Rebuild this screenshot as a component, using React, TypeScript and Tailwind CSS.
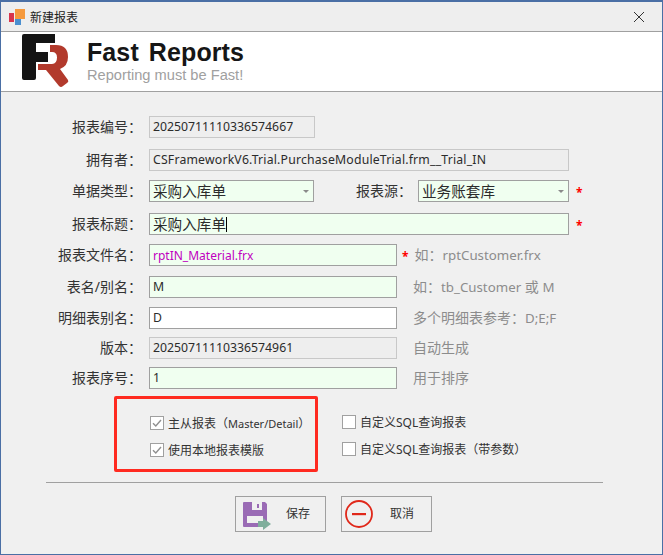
const latin = "font-['Noto_Sans','Noto_Sans_CJK_SC',sans-serif]";

function Label({ text }: { text: string }) {
  return <div className="mr-[7px] w-[98px] shrink-0 whitespace-nowrap text-right text-[14px] leading-[22px] text-[#333]">{text}</div>;
}

function Field({
  value,
  w,
  kind = "edit",
  caret,
  combo,
  textClass = "text-[12.25px] text-[#2b2b2b]",
}: {
  value: string;
  w: string;
  kind?: "edit" | "readonly" | "white";
  caret?: boolean;
  combo?: boolean;
  textClass?: string;
}) {
  const tone =
    kind === "readonly"
      ? "bg-[#eeeeee] border-[#c8c8c8]"
      : kind === "white"
        ? "bg-white border-[#a0a0a0]"
        : "bg-[#f0fff0] border-[#a0a0a0]";
  return (
    <div className={"flex h-[22px] shrink-0 items-center border pl-[3px] pr-[4px] " + w + " " + tone}>
      <span className={"whitespace-pre leading-[20px] " + textClass}>{value}</span>
      {caret && <span className="h-[15px] w-px bg-black" />}
      {combo && <span className="ml-auto mt-px h-0 w-0 border-x-[3px] border-t-[3px] border-x-transparent border-t-[#8a8a8a]" />}
    </div>
  );
}

const bigText = "text-[14.6px] text-[#2b2b2b]";

function Star({ className }: { className: string }) {
  return <div className={"flex h-[22px] items-center pt-[4px] text-[12px] font-bold leading-none text-[#ff0000] " + className}>*</div>;
}

function Hint({ children, className = "" }: { children: React.ReactNode; className?: string }) {
  return <div className={"whitespace-nowrap text-[14px] leading-[22px] text-[#8c8c8c] " + className}>{children}</div>;
}

function Check({ children, checked }: { children: React.ReactNode; checked?: boolean }) {
  return (
    <div className="flex h-[14px] items-center gap-[4px] whitespace-nowrap text-[12px] leading-[14px] text-[#333]">
      <span className="flex h-[14px] w-[14px] shrink-0 items-center justify-center border border-[#a0a0a0] bg-white">
        {checked && (
          <svg width="10" height="10" viewBox="0 0 10 10" fill="none">
            <path d="M1 5.2 L3.8 8 L9 2" stroke="#8f8f8f" strokeWidth="1.4" />
          </svg>
        )}
      </span>
      <span className="mt-[2px]">{children}</span>
    </div>
  );
}

function Logo() {
  return (
    <svg width="47" height="54" viewBox="0 0 47 54" className="shrink-0">
      <path d="M28 11 H34 Q46 11 46 23 Q46 32 38 35 L46 46 Q47 48 45 49 L41 52 Q39 54 37 52 L24 36 H16 V30 H30 Q35 30 35 23.5 Q35 18 30 18 H28 Z" fill="#b23a2c" />
      <path d="M2 0 H33 V9 H14 V18 H26 V28 H14 V44 Q14 46 12 46 H2 Q0 46 0 44 V2 Q0 0 2 0 Z" fill="#141414" />
    </svg>
  );
}

function SaveIcon() {
  return (
    <svg width="28" height="28" viewBox="0 0 28 28" className="mt-[3px] shrink-0">
      <path fillRule="evenodd" d="M1 0 H22 L24 2 V24 Q24 25 23 25 H1 Q0 25 0 24 V1 Q0 0 1 0 Z M9 0 V8 H19 V0 Z M4 14 V21 H20 V14 Z" fill="#9a6bb5" />
      <rect x="14" y="2" width="2" height="4" fill="#9a6bb5" />
      <path d="M15 19 H20 V16 L28 22 L20 28 V25 H15 Z" fill="#7fae9c" />
    </svg>
  );
}

function CancelIcon() {
  return (
    <svg width="28" height="28" viewBox="0 0 28 28" className="shrink-0">
      <circle cx="14" cy="14" r="13" fill="none" stroke="#e0281a" strokeWidth="1.8" />
      <rect x="7" y="13" width="14" height="2.2" fill="#e0281a" />
    </svg>
  );
}

function Btn({ label, icon, className }: { label: string; icon: React.ReactNode; className: string }) {
  return (
    <div className={"flex h-[36px] w-[91px] items-center border border-[#a0a0a0] text-[12px] text-[#333] " + className}>
      {icon}
      <span>{label}</span>
    </div>
  );
}

export default function App() {
  return (
    <div className={"flex h-[555px] w-[663px] flex-col overflow-hidden border border-t-[2px] border-[#4a6fa5] bg-[#f0f0f0] " + latin}>
      <div className="flex h-[29px] shrink-0 items-center bg-[#eeeeee] pl-[8px] pr-[17px]">
        <svg width="16" height="16" viewBox="0 0 16 16" className="shrink-0">
          <rect x="0" y="4" width="5" height="9" fill="#d8344c" />
          <rect x="6" y="0" width="10" height="10" fill="#f59a3e" />
          <rect x="6" y="10" width="6" height="6" fill="#4a8fd0" />
        </svg>
        <span className="ml-[5px] mt-[2px] text-[12px] text-[#222]">新建报表</span>
        <svg width="12" height="12" viewBox="0 0 12 12" className="ml-auto">
          <path d="M1 1 L11 11 M11 1 L1 11" stroke="#333" strokeWidth="1" />
        </svg>
      </div>

      <div className="flex h-[61px] shrink-0 items-start border-y border-[#a0a0a0] bg-white pl-[21px] pt-[2px]">
        <Logo />
        <div className="ml-[18px] font-['Liberation_Sans',sans-serif]">
          <div className="mt-[4px] text-[25px] font-bold leading-[28px] tracking-[0.1px] text-[#161616] [word-spacing:3px]">Fast Reports</div>
          <div className="text-[14.65px] leading-[18px] text-[#a0a0a0]">Reporting must be Fast!</div>
        </div>
      </div>

      <div className="flex flex-col pl-[43px] pt-[24px]">
        <div className="flex items-center">
          <Label text="报表编号：" />
          <Field value="20250711110336574667" w="w-[166px]" kind="readonly" />
        </div>
        <div className="mt-[11px] flex items-center">
          <Label text="拥有者：" />
          <Field value="CSFrameworkV6.Trial.PurchaseModuleTrial.frm__Trial_IN" w="w-[420px]" kind="readonly" textClass="text-[12.25px] tracking-[0.19px] text-[#2b2b2b]" />
        </div>
        <div className="mt-[9px] flex items-center">
          <Label text="单据类型：" />
          <Field value="采购入库单" w="w-[165px]" combo textClass={bigText} />
          <span className="ml-[42px] w-[62px] shrink-0 whitespace-nowrap text-[14px] leading-[22px] text-[#333]">报表源：</span>
          <Field value="业务账套库" w="w-[151px]" combo textClass={bigText} />
          <Star className="ml-[7px]" />
        </div>
        <div className="mt-[11px] flex items-center">
          <Label text="报表标题：" />
          <Field value="采购入库单" w="w-[420px]" caret textClass={bigText} />
          <Star className="ml-[7px]" />
        </div>
        <div className="mt-[9px] flex items-center">
          <Label text="报表文件名：" />
          <Field value="rptIN_Material.frx" w="w-[248px]" textClass="mt-px text-[12px] text-[#c000c0]" />
          <Star className="ml-[5px] mr-[6px]" />
          <Hint>如：<span className="text-[13.3px]">rptCustomer.frx</span></Hint>
        </div>
        <div className="mt-[10px] flex items-center">
          <Label text="表名/别名：" />
          <Field value="M" w="w-[248px]" />
          <Hint className="ml-[16px]">如：<span className="text-[13.3px]">tb_Customer</span> 或 <span className="text-[13.3px]">M</span></Hint>
        </div>
        <div className="mt-[9px] flex items-center">
          <Label text="明细表别名：" />
          <Field value="D" w="w-[248px]" kind="white" />
          <Hint className="ml-[16px]">多个明细表参考：<span className="text-[13.3px]">D;E;F</span></Hint>
        </div>
        <div className="mt-[8px] flex items-center">
          <Label text="版本：" />
          <Field value="20250711110336574961" w="w-[248px]" kind="readonly" />
          <Hint className="ml-[16px]">自动生成</Hint>
        </div>
        <div className="mt-[8px] flex items-center">
          <Label text="报表序号：" />
          <Field value="1" w="w-[248px]" />
          <Hint className="ml-[16px]">用于排序</Hint>
        </div>

        <div className="ml-[70px] mt-[7px] flex items-start">
          <div className="flex h-[76px] w-[204px] shrink-0 flex-col gap-[13px] rounded-[2px] border-[3px] border-[#ff2a20] pl-[33px] pt-[17px]">
            <Check checked>主从报表（<span className="text-[11px]">Master/Detail</span>）</Check>
            <Check checked>使用本地报表模版</Check>
          </div>
          <div className="ml-[24px] flex flex-col gap-[13px] pt-[19px]">
            <Check>自定义SQL查询报表</Check>
            <Check>自定义SQL查询报表（带参数）</Check>
          </div>
        </div>

        <div className="ml-[2px] mt-[10px] h-px w-[557px] bg-[#a0a0a0]" />

        <div className="ml-[191px] mt-[13px] flex gap-[15px]">
          <Btn label="保存" icon={<SaveIcon />} className="gap-[15px] pl-[7px]" />
          <Btn label="取消" icon={<CancelIcon />} className="gap-[17px] pl-[3px]" />
        </div>
      </div>
    </div>
  );
}
